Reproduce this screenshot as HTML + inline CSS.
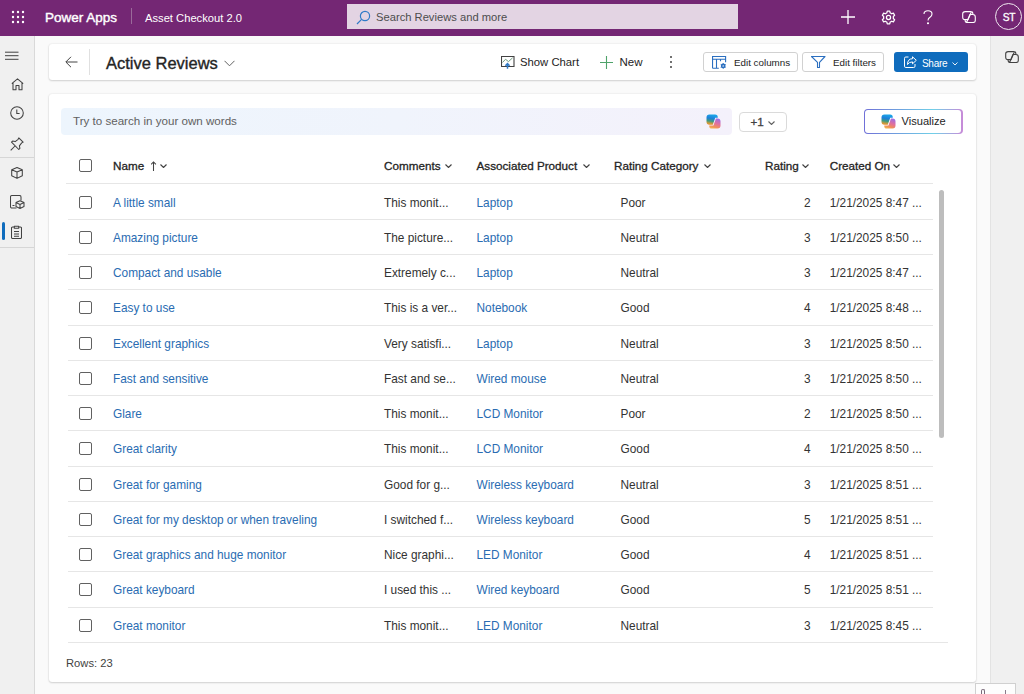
<!DOCTYPE html>
<html><head><meta charset="utf-8">
<style>
*{box-sizing:border-box;margin:0;padding:0}
html,body{width:1024px;height:694px;overflow:hidden;background:#fafafa;font-family:"Liberation Sans",sans-serif;color:#242424}
.a{position:absolute;white-space:nowrap;line-height:1.15}
#top{position:absolute;left:0;top:0;width:1024px;height:36px;background:#742774}
#nav{position:absolute;left:0;top:36px;width:35px;height:658px;background:#f0f0f0;border-right:1px solid #d9d9d9}
#rp{position:absolute;left:990px;top:36px;width:34px;height:658px;background:#f0f0f0;border-left:1px solid #e3e3e3}
.card{position:absolute;background:#fff;border-radius:3px;box-shadow:0 1px 2px rgba(0,0,0,.14),0 0 2px rgba(0,0,0,.12)}
.hd{font-weight:400;font-size:11.7px;color:#242424;-webkit-text-stroke:0.3px #242424}
.lk{color:#2a6cb2;font-size:11.85px}
.tx{color:#333333;font-size:11.85px}
.div{position:absolute;left:68px;width:865px;height:1px;background:#e6e6e6}
.cb{position:absolute;left:79px;width:13px;height:13px;border:1px solid #616161;border-radius:2px}
</style></head><body>
<div id="top">
  <svg class="a" style="left:11px;top:10px" width="14" height="14" viewBox="0 0 14 14" fill="#fff">
    <circle cx="2" cy="2" r="1.2"/><circle cx="7" cy="2" r="1.2"/><circle cx="12" cy="2" r="1.2"/>
    <circle cx="2" cy="7" r="1.2"/><circle cx="7" cy="7" r="1.2"/><circle cx="12" cy="7" r="1.2"/>
    <circle cx="2" cy="12" r="1.2"/><circle cx="7" cy="12" r="1.2"/><circle cx="12" cy="12" r="1.2"/>
  </svg>
  <div class="a" style="left:45px;top:9.6px;font-size:13.5px;font-weight:400;-webkit-text-stroke:0.4px #fff;color:#fff">Power Apps</div>
  <div class="a" style="left:131px;top:8px;width:1px;height:16px;background:#9a6a9a"></div>
  <div class="a" style="left:145px;top:11.5px;font-size:11.2px;color:#fff">Asset Checkout 2.0</div>
  <div class="a" style="left:347px;top:4px;width:391px;height:25px;background:#e3d4e3"></div>
  <svg class="a" style="left:356px;top:9.5px" width="15" height="15" viewBox="0 0 15 15" fill="none" stroke="#2f7ac7" stroke-width="1.2">
    <circle cx="9" cy="6" r="4.6"/><path d="M5.6 9.4 L1 14"/>
  </svg>
  <div class="a" style="left:376px;top:10.5px;font-size:11.2px;color:#4d4d4d">Search Reviews and more</div>
  <svg class="a" style="left:841px;top:10px" width="14" height="14" viewBox="0 0 14 14" fill="none" stroke="#fff" stroke-width="1.3"><path d="M7 0 V14 M0 7 H14"/></svg>
  <svg class="a" style="left:880.5px;top:9.5px" width="15" height="15" viewBox="0 0 24 24" fill="none" stroke="#fff" stroke-width="2" stroke-linejoin="round">
    <path d="M10 1.8 H14 L14.6 4.6 Q16 5.1 17.1 6 L19.8 5 L21.8 8.5 L19.7 10.4 Q19.9 12 19.7 13.6 L21.8 15.5 L19.8 19 L17.1 18 Q16 18.9 14.6 19.4 L14 22.2 H10 L9.4 19.4 Q8 18.9 6.9 18 L4.2 19 L2.2 15.5 L4.3 13.6 Q4.1 12 4.3 10.4 L2.2 8.5 L4.2 5 L6.9 6 Q8 5.1 9.4 4.6 Z"/>
    <circle cx="12" cy="12" r="3.3"/>
  </svg>
  <svg class="a" style="left:923px;top:10px" width="10" height="15" viewBox="0 0 10 15" fill="none" stroke="#fff" stroke-width="1.1">
    <path d="M1 4 Q1 0.8 5 0.8 Q9 0.8 9 4 Q9 6 7 7.2 Q5 8.4 5 10.5"/><circle cx="5" cy="13.3" r="0.5" fill="#fff"/>
  </svg>
  <svg class="a" style="left:962px;top:11px" width="14" height="12.2" viewBox="0 0 24 24" preserveAspectRatio="none" fill="none" stroke="#fff" stroke-linejoin="round">
<path vector-effect="non-scaling-stroke" stroke-width="1.1" d="M5.5 1.2 H14.6 Q18.6 1.2 18.6 5 V6.4 M14.8 1.2 Q16.2 1.2 15.6 3 L10.4 17 H5.5 Q1.2 17 1.2 12.3 V5.5 Q1.2 1.2 5.5 1.2 Z"/>
<path vector-effect="non-scaling-stroke" stroke-width="1.1" d="M18.5 22.8 H9.4 Q5.4 22.8 5.4 19 V17.6 M9.2 22.8 Q7.8 22.8 8.4 21 L13.6 7 H18.5 Q22.8 7 22.8 11.7 V18.5 Q22.8 22.8 18.5 22.8 Z"/>
</svg>
  <div class="a" style="left:995px;top:3.1px;width:27.2px;height:27.2px;border:1px solid #f0e8f0;border-radius:50%"></div>
  <div class="a" style="left:995.5px;top:11.5px;width:27px;text-align:center;font-size:10.2px;letter-spacing:-0.3px;-webkit-text-stroke:0.3px #fff;color:#fff">ST</div>
</div>
<div id="nav">
  <svg class="a" style="left:5px;top:15px" width="14" height="10" viewBox="0 0 14 10" fill="none" stroke="#424242" stroke-width="1"><path d="M0 1.2 H13.5 M0 4.7 H13.5 M0 8.3 H13.5"/></svg>
  <svg class="a" style="left:10.5px;top:42px" width="13" height="12.5" viewBox="0 0 13 12.5" fill="none" stroke="#424242" stroke-width="1.05" stroke-linejoin="round">
    <path d="M0.8 5.6 L6.5 0.8 L12.2 5.6 M2 4.6 V11.8 H5 V7.5 H8 V11.8 H11 V4.6"/>
  </svg>
  <svg class="a" style="left:10px;top:70px" width="14" height="14" viewBox="0 0 14 14" fill="none" stroke="#424242" stroke-width="1.05">
    <circle cx="7" cy="7" r="6.3"/><path d="M6.8 3.5 V7.5 H9.6"/>
  </svg>
  <svg class="a" style="left:10px;top:100.5px" width="14" height="14" viewBox="0 0 14 14" fill="none" stroke="#424242" stroke-width="1.05" stroke-linejoin="round">
    <path d="M8.8 0.9 L13.1 5.2 L11.7 5.9 L9.4 8.8 L9.9 11.4 L8.8 12.5 L1.5 5.2 L2.6 4.1 L5.2 4.6 L8.1 2.3 Z M5 9 L0.7 13.3"/>
  </svg>
  <div class="a" style="left:0;top:121px;width:34px;height:1px;background:#d6d6d6"></div>
  <svg class="a" style="left:11px;top:131px" width="12" height="12" viewBox="0 0 12 12" fill="none" stroke="#424242" stroke-width="1.05" stroke-linejoin="round">
    <path d="M6 0.6 L11.3 2.8 V8.8 L6 11.4 L0.7 8.8 V2.8 Z M0.7 2.8 L6 5 L11.3 2.8 M6 5 V11.4"/>
  </svg>
  <svg class="a" style="left:10px;top:159px" width="15" height="14" viewBox="0 0 15 14" fill="none" stroke="#424242" stroke-width="1.05" stroke-linejoin="round">
    <path d="M6.5 13 H2 Q0.5 13 0.5 11.5 V2 Q0.5 0.5 2 0.5 H9.5 Q11 0.5 11 2 V5.5 M2.5 10.5 H4.5"/>
    <path d="M10 5.8 L14 7.6 V11.6 L10 13.4 L6 11.6 V7.6 Z M6 7.6 L10 9.4 L14 7.6 M10 9.4 V13.4"/>
  </svg>
  <div class="a" style="left:1.5px;top:186px;width:3px;height:18px;background:#0f6cbd;border-radius:2px"></div>
  <svg class="a" style="left:11px;top:188.5px" width="11" height="14" viewBox="0 0 11 14" fill="none" stroke="#424242" stroke-width="1.05" stroke-linejoin="round">
    <path d="M3.3 2 H1.5 Q0.5 2 0.5 3 V12.5 Q0.5 13.5 1.5 13.5 H9.5 Q10.5 13.5 10.5 12.5 V3 Q10.5 2 9.5 2 H7.7 M3.3 1.2 H7.7 V3.2 H3.3 Z M3 6.5 H8 M3 9 H8 M3 11.3 H8"/>
  </svg>
  <div class="a" style="left:0;top:210.5px;width:34px;height:1px;background:#d6d6d6"></div>
</div>
<div id="rp">
  <svg class="a" style="left:13.8px;top:15px" width="14" height="12.2" viewBox="0 0 24 24" preserveAspectRatio="none" fill="none" stroke="#424242" stroke-linejoin="round">
<path vector-effect="non-scaling-stroke" stroke-width="1.1" d="M5.5 1.2 H14.6 Q18.6 1.2 18.6 5 V6.4 M14.8 1.2 Q16.2 1.2 15.6 3 L10.4 17 H5.5 Q1.2 17 1.2 12.3 V5.5 Q1.2 1.2 5.5 1.2 Z"/>
<path vector-effect="non-scaling-stroke" stroke-width="1.1" d="M18.5 22.8 H9.4 Q5.4 22.8 5.4 19 V17.6 M9.2 22.8 Q7.8 22.8 8.4 21 L13.6 7 H18.5 Q22.8 7 22.8 11.7 V18.5 Q22.8 22.8 18.5 22.8 Z"/>
</svg>
</div>
<div class="card" style="left:48.6px;top:44.2px;width:927.4px;height:35.8px"></div>
<div class="card" style="left:48.6px;top:93.6px;width:927.4px;height:588px"></div>

<!-- command bar content -->
<svg class="a" style="left:65px;top:56px" width="13" height="12" viewBox="0 0 13 12" fill="none" stroke="#424242" stroke-width="1">
  <path d="M12.5 6 H1 M6 0.8 L0.8 6 L6 11.2"/>
</svg>
<div class="a" style="left:89px;top:49px;width:1px;height:26px;background:#e0e0e0"></div>
<div class="a" style="left:106px;top:53.5px;font-size:16.5px;font-weight:400;-webkit-text-stroke:0.35px #242424;color:#242424">Active Reviews</div>
<svg class="a" style="left:224px;top:59.5px" width="11" height="7" viewBox="0 0 11 7" fill="none" stroke="#616161" stroke-width="1">
  <path d="M0.5 0.8 L5.5 5.8 L10.5 0.8"/>
</svg>
<svg class="a" style="left:500.5px;top:56px" width="14" height="14" viewBox="0 0 14 14" fill="none" stroke="#424242" stroke-width="1.1">
  <path d="M0.5 0.5 H13 V10.5 H0.5 Z"/>
  <path d="M1.5 6.5 L4.5 3.3 L7.5 5.6 L11.6 1.8" stroke="#5f8f70" stroke-width="0.9"/>
  <path d="M6.5 12.8 V7.8 M4.4 9.8 L6.5 7.5 L8.6 9.8" stroke="#2f7ac7" stroke-width="1.5"/>
</svg>
<div class="a" style="left:520px;top:56px;font-size:11.3px;color:#242424">Show Chart</div>
<svg class="a" style="left:600px;top:56px" width="13" height="13" viewBox="0 0 13 13" fill="none" stroke="#4fa36a" stroke-width="1.1">
  <path d="M6.5 0 V13 M0 6.5 H13"/>
</svg>
<div class="a" style="left:619.5px;top:56px;font-size:11.5px;color:#242424">New</div>
<svg class="a" style="left:669px;top:55px" width="4" height="14" viewBox="0 0 4 14" fill="#424242">
  <circle cx="2" cy="2" r="1"/><circle cx="2" cy="7" r="1"/><circle cx="2" cy="12" r="1"/>
</svg>
<div class="a" style="left:703px;top:52px;width:95px;height:20px;border:1px solid #d1d1d1;border-radius:3px"></div>
<svg class="a" style="left:711.5px;top:56px" width="15" height="13" viewBox="0 0 15 13" fill="none" stroke="#2b6fc0" stroke-width="1.1">
  <path d="M0.55 12.2 V0.55 H13.6 V6.2 M0.55 12.2 H6.8 M0.55 3.3 H13.6 M4.5 3.3 V12.2 M8.5 3.3 V5.2"/>
  <circle cx="11.2" cy="9.9" r="1.7" stroke-width="1.4"/>
  <path d="M11.2 7 V12.8 M8.7 8.45 L13.7 11.35 M8.7 11.35 L13.7 8.45" stroke-width="0.9"/>
  <circle cx="11.2" cy="9.9" r="0.7" fill="#fff" stroke="none"/>
</svg>
<div class="a" style="left:734px;top:57px;font-size:9.8px;color:#242424">Edit columns</div>
<div class="a" style="left:802px;top:52px;width:82px;height:20px;border:1px solid #d1d1d1;border-radius:3px"></div>
<svg class="a" style="left:810.5px;top:56px" width="15" height="13" viewBox="0 0 15 13" fill="none" stroke="#2b6fc0" stroke-width="1.1" stroke-linejoin="round">
  <path d="M0.5 0.5 H14 L8.5 6.3 V11.5 H6.5 V6.3 Z"/>
</svg>
<div class="a" style="left:833px;top:57px;font-size:9.8px;color:#242424">Edit filters</div>
<div class="a" style="left:894px;top:52px;width:74px;height:20px;background:#0f6cbd;border-radius:3px"></div>
<svg class="a" style="left:904px;top:56px" width="13" height="12" viewBox="0 0 13 12" fill="none" stroke="#fff" stroke-width="1">
  <path d="M4.5 1 H1.8 Q0.5 1 0.5 2.3 V10.2 Q0.5 11.5 1.8 11.5 H9.7 Q11 11.5 11 10.2 V8"/>
  <path d="M8.5 0.8 L12.3 4.3 L8.5 7.8 V5.9 Q5 5.9 3.5 8.5 Q3.5 2.8 8.5 2.7 Z"/>
</svg>
<div class="a" style="left:922px;top:57.5px;font-size:10px;letter-spacing:-0.3px;color:#fff">Share</div>
<svg class="a" style="left:952px;top:61.5px" width="6" height="3.5" viewBox="0 0 6 3.5" fill="none" stroke="#fff" stroke-width="0.9"><path d="M0.5 0.5 L3.0 3.0 L5.5 0.5"/></svg>

<!-- search row -->
<div class="a" style="left:61px;top:108px;width:671px;height:27px;background:linear-gradient(90deg,#edf5fd 0%,#f0f4fc 50%,#f4f1fb 100%);border-radius:4px"></div>
<div class="a" style="left:73px;top:114px;font-size:11.6px;color:#616161">Try to search in your own words</div>
<svg class="a" style="left:706px;top:114px" width="15" height="15" viewBox="0 0 24 24">
<defs>
<linearGradient id="cg1706" x1="0.3" y1="0" x2="0.1" y2="1"><stop offset="0" stop-color="#1aa3e8"/><stop offset="0.35" stop-color="#1e7fd8"/><stop offset="0.62" stop-color="#3f9a7e"/><stop offset="0.85" stop-color="#d09a38"/><stop offset="1" stop-color="#f08a30"/></linearGradient>
<linearGradient id="cg2706" x1="0.7" y1="0" x2="0.3" y2="1"><stop offset="0" stop-color="#9d6fe6"/><stop offset="0.45" stop-color="#e0709e"/><stop offset="0.8" stop-color="#f0905a"/><stop offset="1" stop-color="#f4b050"/></linearGradient>
</defs>
<path d="M5.5 0.8 H14.6 Q18.8 0.8 18.8 5 V6 H14.8 L10.8 17 H5.5 Q0.8 17 0.8 12.3 V5.5 Q0.8 0.8 5.5 0.8 Z" fill="url(#cg1706)"/>
<path d="M18.5 23.2 H9.4 Q5.2 23.2 5.2 19 V18.2 H11.9 L15.9 7.2 H18.5 Q23.2 7.2 23.2 11.9 V18.5 Q23.2 23.2 18.5 23.2 Z" fill="url(#cg2706)"/>
</svg>
<div class="a" style="left:739px;top:111.8px;width:47.5px;height:20px;border:1px solid #dadada;border-radius:4px"></div>
<div class="a" style="left:750.5px;top:114.5px;font-size:11.7px;-webkit-text-stroke:0.3px #424242;color:#424242">+1</div>
<svg class="a" style="left:767.5px;top:121px" width="7" height="4" viewBox="0 0 7 4" fill="none" stroke="#616161" stroke-width="1.1"><path d="M0.5 0.5 L3.5 3.5 L6.5 0.5"/></svg>
<div class="a" style="left:863.6px;top:108.8px;width:99px;height:25.2px;border-radius:4px;background:linear-gradient(90deg,#7070d8,#6fa8e0 40%,#70d0e8 70%,#c88ad8)"></div>
<div class="a" style="left:864.9px;top:110.1px;width:96.4px;height:22.6px;border-radius:3px;background:#fff"></div>
<svg class="a" style="left:881px;top:114px" width="15" height="15" viewBox="0 0 24 24">
<defs>
<linearGradient id="cg1881" x1="0.3" y1="0" x2="0.1" y2="1"><stop offset="0" stop-color="#1aa3e8"/><stop offset="0.35" stop-color="#1e7fd8"/><stop offset="0.62" stop-color="#3f9a7e"/><stop offset="0.85" stop-color="#d09a38"/><stop offset="1" stop-color="#f08a30"/></linearGradient>
<linearGradient id="cg2881" x1="0.7" y1="0" x2="0.3" y2="1"><stop offset="0" stop-color="#9d6fe6"/><stop offset="0.45" stop-color="#e0709e"/><stop offset="0.8" stop-color="#f0905a"/><stop offset="1" stop-color="#f4b050"/></linearGradient>
</defs>
<path d="M5.5 0.8 H14.6 Q18.8 0.8 18.8 5 V6 H14.8 L10.8 17 H5.5 Q0.8 17 0.8 12.3 V5.5 Q0.8 0.8 5.5 0.8 Z" fill="url(#cg1881)"/>
<path d="M18.5 23.2 H9.4 Q5.2 23.2 5.2 19 V18.2 H11.9 L15.9 7.2 H18.5 Q23.2 7.2 23.2 11.9 V18.5 Q23.2 23.2 18.5 23.2 Z" fill="url(#cg2881)"/>
</svg>
<div class="a" style="left:901.5px;top:115px;font-size:11.1px;color:#242424">Visualize</div>

<!-- grid header -->
<div class="cb" style="top:159.3px"></div>
<div class="a hd" style="left:113px;top:159.2px">Name</div>
<svg class="a" style="left:150.5px;top:161px" width="6" height="10" viewBox="0 0 6 10" fill="none" stroke="#424242" stroke-width="1.05"><path d="M2.5 10 V1 M0.1 3.3 L2.5 0.9 L4.9 3.3"/></svg>
<svg class="a" style="left:160px;top:163.5px" width="7" height="4" viewBox="0 0 7 4" fill="none" stroke="#424242" stroke-width="1.15"><path d="M0.5 0.5 L3.5 3.5 L6.5 0.5"/></svg>
<div class="a hd" style="left:384px;top:159.2px">Comments</div>
<svg class="a" style="left:445px;top:163.5px" width="7" height="4" viewBox="0 0 7 4" fill="none" stroke="#424242" stroke-width="1.15"><path d="M0.5 0.5 L3.5 3.5 L6.5 0.5"/></svg>
<div class="a hd" style="left:476.5px;top:159.2px">Associated Product</div>
<svg class="a" style="left:583px;top:163.5px" width="7" height="4" viewBox="0 0 7 4" fill="none" stroke="#424242" stroke-width="1.15"><path d="M0.5 0.5 L3.5 3.5 L6.5 0.5"/></svg>
<div class="a hd" style="left:614px;top:159.2px">Rating Category</div>
<svg class="a" style="left:704px;top:163.5px" width="7" height="4" viewBox="0 0 7 4" fill="none" stroke="#424242" stroke-width="1.15"><path d="M0.5 0.5 L3.5 3.5 L6.5 0.5"/></svg>
<div class="a hd" style="left:765px;top:159.2px">Rating</div>
<svg class="a" style="left:802px;top:163.5px" width="7" height="4" viewBox="0 0 7 4" fill="none" stroke="#424242" stroke-width="1.15"><path d="M0.5 0.5 L3.5 3.5 L6.5 0.5"/></svg>
<div class="a hd" style="left:829.7px;top:159.2px">Created On</div>
<svg class="a" style="left:893px;top:163.5px" width="7" height="4" viewBox="0 0 7 4" fill="none" stroke="#424242" stroke-width="1.15"><path d="M0.5 0.5 L3.5 3.5 L6.5 0.5"/></svg>
<div class="div" style="left:66px;width:867px;top:183px"></div>
<div class="a" style="left:939px;top:190px;width:4.5px;height:248px;background:#bdbdbd;border-radius:3px"></div>
<div class="a" style="left:66px;top:657px;font-size:11.2px;color:#424242">Rows: 23</div>
<div class="a" style="left:975px;top:683px;width:41px;height:14px;border:1px solid #d0d0d0;background:#fdfdfd"></div>
<div class="a" style="left:981px;top:689px;width:4px;height:5px;border:1px solid #7a6a7a;border-bottom:none;border-radius:2px 2px 0 0"></div>
<div class="a" style="left:1005px;top:690px;width:1px;height:4px;background:#8a7a8a"></div>
<div class="cb" style="top:195.5px"></div>
<div class="a lk" style="left:113px;top:196.6px">A little small</div>
<div class="a tx" style="left:384px;top:196.6px">This monit...</div>
<div class="a lk" style="left:476.5px;top:196.6px">Laptop</div>
<div class="a tx" style="left:620.5px;top:196.6px">Poor</div>
<div class="a tx" style="left:760px;width:50.5px;text-align:right;top:196.6px">2</div>
<div class="a tx" style="left:829.7px;top:196.6px">1/21/2025 8:47 ...</div>
<div class="div" style="top:218.80px;width:865px"></div>
<div class="cb" style="top:230.8px"></div>
<div class="a lk" style="left:113px;top:231.8px">Amazing picture</div>
<div class="a tx" style="left:384px;top:231.8px">The picture...</div>
<div class="a lk" style="left:476.5px;top:231.8px">Laptop</div>
<div class="a tx" style="left:620.5px;top:231.8px">Neutral</div>
<div class="a tx" style="left:760px;width:50.5px;text-align:right;top:231.8px">3</div>
<div class="a tx" style="left:829.7px;top:231.8px">1/21/2025 8:50 ...</div>
<div class="div" style="top:254.05px;width:865px"></div>
<div class="cb" style="top:266.0px"></div>
<div class="a lk" style="left:113px;top:267.1px">Compact and usable</div>
<div class="a tx" style="left:384px;top:267.1px">Extremely c...</div>
<div class="a lk" style="left:476.5px;top:267.1px">Laptop</div>
<div class="a tx" style="left:620.5px;top:267.1px">Neutral</div>
<div class="a tx" style="left:760px;width:50.5px;text-align:right;top:267.1px">3</div>
<div class="a tx" style="left:829.7px;top:267.1px">1/21/2025 8:47 ...</div>
<div class="div" style="top:289.30px;width:865px"></div>
<div class="cb" style="top:301.2px"></div>
<div class="a lk" style="left:113px;top:302.4px">Easy to use</div>
<div class="a tx" style="left:384px;top:302.4px">This is a ver...</div>
<div class="a lk" style="left:476.5px;top:302.4px">Notebook</div>
<div class="a tx" style="left:620.5px;top:302.4px">Good</div>
<div class="a tx" style="left:760px;width:50.5px;text-align:right;top:302.4px">4</div>
<div class="a tx" style="left:829.7px;top:302.4px">1/21/2025 8:48 ...</div>
<div class="div" style="top:324.55px;width:865px"></div>
<div class="cb" style="top:336.5px"></div>
<div class="a lk" style="left:113px;top:337.6px">Excellent graphics</div>
<div class="a tx" style="left:384px;top:337.6px">Very satisfi...</div>
<div class="a lk" style="left:476.5px;top:337.6px">Laptop</div>
<div class="a tx" style="left:620.5px;top:337.6px">Neutral</div>
<div class="a tx" style="left:760px;width:50.5px;text-align:right;top:337.6px">3</div>
<div class="a tx" style="left:829.7px;top:337.6px">1/21/2025 8:50 ...</div>
<div class="div" style="top:359.80px;width:865px"></div>
<div class="cb" style="top:371.8px"></div>
<div class="a lk" style="left:113px;top:372.9px">Fast and sensitive</div>
<div class="a tx" style="left:384px;top:372.9px">Fast and se...</div>
<div class="a lk" style="left:476.5px;top:372.9px">Wired mouse</div>
<div class="a tx" style="left:620.5px;top:372.9px">Neutral</div>
<div class="a tx" style="left:760px;width:50.5px;text-align:right;top:372.9px">3</div>
<div class="a tx" style="left:829.7px;top:372.9px">1/21/2025 8:50 ...</div>
<div class="div" style="top:395.05px;width:865px"></div>
<div class="cb" style="top:407.0px"></div>
<div class="a lk" style="left:113px;top:408.1px">Glare</div>
<div class="a tx" style="left:384px;top:408.1px">This monit...</div>
<div class="a lk" style="left:476.5px;top:408.1px">LCD Monitor</div>
<div class="a tx" style="left:620.5px;top:408.1px">Poor</div>
<div class="a tx" style="left:760px;width:50.5px;text-align:right;top:408.1px">2</div>
<div class="a tx" style="left:829.7px;top:408.1px">1/21/2025 8:50 ...</div>
<div class="div" style="top:430.30px;width:865px"></div>
<div class="cb" style="top:442.2px"></div>
<div class="a lk" style="left:113px;top:443.4px">Great clarity</div>
<div class="a tx" style="left:384px;top:443.4px">This monit...</div>
<div class="a lk" style="left:476.5px;top:443.4px">LCD Monitor</div>
<div class="a tx" style="left:620.5px;top:443.4px">Good</div>
<div class="a tx" style="left:760px;width:50.5px;text-align:right;top:443.4px">4</div>
<div class="a tx" style="left:829.7px;top:443.4px">1/21/2025 8:50 ...</div>
<div class="div" style="top:465.55px;width:865px"></div>
<div class="cb" style="top:477.5px"></div>
<div class="a lk" style="left:113px;top:478.6px">Great for gaming</div>
<div class="a tx" style="left:384px;top:478.6px">Good for g...</div>
<div class="a lk" style="left:476.5px;top:478.6px">Wireless keyboard</div>
<div class="a tx" style="left:620.5px;top:478.6px">Neutral</div>
<div class="a tx" style="left:760px;width:50.5px;text-align:right;top:478.6px">3</div>
<div class="a tx" style="left:829.7px;top:478.6px">1/21/2025 8:51 ...</div>
<div class="div" style="top:500.80px;width:865px"></div>
<div class="cb" style="top:512.8px"></div>
<div class="a lk" style="left:113px;top:513.9px">Great for my desktop or when traveling</div>
<div class="a tx" style="left:384px;top:513.9px">I switched f...</div>
<div class="a lk" style="left:476.5px;top:513.9px">Wireless keyboard</div>
<div class="a tx" style="left:620.5px;top:513.9px">Good</div>
<div class="a tx" style="left:760px;width:50.5px;text-align:right;top:513.9px">5</div>
<div class="a tx" style="left:829.7px;top:513.9px">1/21/2025 8:51 ...</div>
<div class="div" style="top:536.05px;width:865px"></div>
<div class="cb" style="top:548.0px"></div>
<div class="a lk" style="left:113px;top:549.1px">Great graphics and huge monitor</div>
<div class="a tx" style="left:384px;top:549.1px">Nice graphi...</div>
<div class="a lk" style="left:476.5px;top:549.1px">LED Monitor</div>
<div class="a tx" style="left:620.5px;top:549.1px">Good</div>
<div class="a tx" style="left:760px;width:50.5px;text-align:right;top:549.1px">4</div>
<div class="a tx" style="left:829.7px;top:549.1px">1/21/2025 8:51 ...</div>
<div class="div" style="top:571.30px;width:865px"></div>
<div class="cb" style="top:583.2px"></div>
<div class="a lk" style="left:113px;top:584.4px">Great keyboard</div>
<div class="a tx" style="left:384px;top:584.4px">I used this ...</div>
<div class="a lk" style="left:476.5px;top:584.4px">Wired keyboard</div>
<div class="a tx" style="left:620.5px;top:584.4px">Good</div>
<div class="a tx" style="left:760px;width:50.5px;text-align:right;top:584.4px">5</div>
<div class="a tx" style="left:829.7px;top:584.4px">1/21/2025 8:51 ...</div>
<div class="div" style="top:606.55px;width:865px"></div>
<div class="cb" style="top:618.5px"></div>
<div class="a lk" style="left:113px;top:619.6px">Great monitor</div>
<div class="a tx" style="left:384px;top:619.6px">This monit...</div>
<div class="a lk" style="left:476.5px;top:619.6px">LED Monitor</div>
<div class="a tx" style="left:620.5px;top:619.6px">Neutral</div>
<div class="a tx" style="left:760px;width:50.5px;text-align:right;top:619.6px">3</div>
<div class="a tx" style="left:829.7px;top:619.6px">1/21/2025 8:45 ...</div>
<div class="div" style="top:641.80px;width:880px"></div>
</body></html>
